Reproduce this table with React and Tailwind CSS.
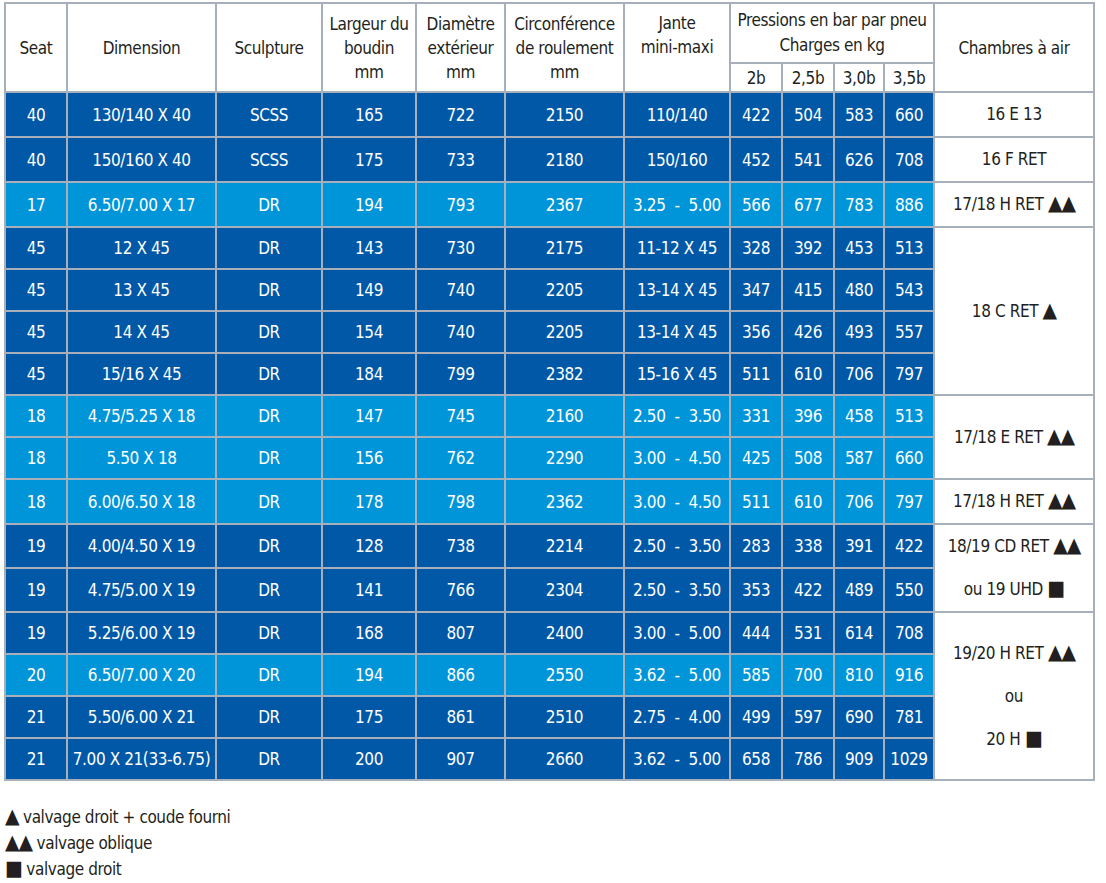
const DARK = "bg-[#0058a7]";
const LIGHT = "bg-[#0095d9]";

const rows = [
  ["40", "130/140 X 40", "SCSS", "165", "722", "2150", "110/140", "422", "504", "583", "660", "d"],
  ["40", "150/160 X 40", "SCSS", "175", "733", "2180", "150/160", "452", "541", "626", "708", "d"],
  ["17", "6.50/7.00 X 17", "DR", "194", "793", "2367", "3.25  -  5.00", "566", "677", "783", "886", "l"],
  ["45", "12 X 45", "DR", "143", "730", "2175", "11-12 X 45", "328", "392", "453", "513", "d"],
  ["45", "13 X 45", "DR", "149", "740", "2205", "13-14 X 45", "347", "415", "480", "543", "d"],
  ["45", "14 X 45", "DR", "154", "740", "2205", "13-14 X 45", "356", "426", "493", "557", "d"],
  ["45", "15/16 X 45", "DR", "184", "799", "2382", "15-16 X 45", "511", "610", "706", "797", "d"],
  ["18", "4.75/5.25 X 18", "DR", "147", "745", "2160", "2.50  -  3.50", "331", "396", "458", "513", "l"],
  ["18", "5.50 X 18", "DR", "156", "762", "2290", "3.00  -  4.50", "425", "508", "587", "660", "l"],
  ["18", "6.00/6.50 X 18", "DR", "178", "798", "2362", "3.00  -  4.50", "511", "610", "706", "797", "l"],
  ["19", "4.00/4.50 X 19", "DR", "128", "738", "2214", "2.50  -  3.50", "283", "338", "391", "422", "d"],
  ["19", "4.75/5.00 X 19", "DR", "141", "766", "2304", "2.50  -  3.50", "353", "422", "489", "550", "d"],
  ["19", "5.25/6.00 X 19", "DR", "168", "807", "2400", "3.00  -  5.00", "444", "531", "614", "708", "d"],
  ["20", "6.50/7.00 X 20", "DR", "194", "866", "2550", "3.62  -  5.00", "585", "700", "810", "916", "l"],
  ["21", "5.50/6.00 X 21", "DR", "175", "861", "2510", "2.75  -  4.00", "499", "597", "690", "781", "d"],
  ["21", "7.00 X 21(33-6.75)", "DR", "200", "907", "2660", "3.62  -  5.00", "658", "786", "909", "1029", "d"],
];

// chambres à air, keyed by the row index where the merged cell starts
const chambres = {
  0: { span: 1, lines: [["16 E 13", ""]] },
  1: { span: 1, lines: [["16 F RET", ""]] },
  2: { span: 1, lines: [["17/18 H RET ", "▲▲"]] },
  3: { span: 4, lines: [["18 C RET ", "▲"]] },
  7: { span: 2, lines: [["17/18 E RET ", "▲▲"]] },
  9: { span: 1, lines: [["17/18 H RET ", "▲▲"]] },
  10: { span: 2, lines: [["18/19 CD RET ", "▲▲"], ["ou 19 UHD ", "■"]] },
  12: { span: 4, lines: [["19/20 H RET ", "▲▲"], ["ou", ""], ["20 H ", "■"]] },
};

const widths = [62, 149, 106, 94, 89, 119, 106, 52, 52, 50, 50, 160];
const cell = "border-2 border-[#a7b0ba] text-center align-middle p-0";

function Sym({ s }) {
  if (!s) return null;
  return <span className="text-[21px] leading-none tracking-[-1px]">{s}</span>;
}

export default function App() {
  return (
    <div
      className="bg-white min-h-screen pt-[2px] pl-[4px] text-[17px] tracking-[-0.4px] text-[#231f20]"
      style={{ fontFamily: '"Liberation Sans Narrow", "DejaVu Sans Condensed", "Liberation Sans", sans-serif' }}
    >
      <table className="table-fixed border-collapse w-[1090px] border-2 border-[#a7b0ba]">
        <colgroup>
          {widths.map((w, i) => (
            <col key={i} style={{ width: w }} />
          ))}
        </colgroup>
        <thead>
          <tr className="h-[60px]">
            <th rowSpan={2} className={`${cell} font-normal leading-[24px]`}>Seat</th>
            <th rowSpan={2} className={`${cell} font-normal leading-[24px]`}>Dimension</th>
            <th rowSpan={2} className={`${cell} font-normal leading-[24px]`}>Sculpture</th>
            <th rowSpan={2} className={`${cell} font-normal leading-[24px]`}>
              Largeur du
              <br />
              boudin
              <br />
              mm
            </th>
            <th rowSpan={2} className={`${cell} font-normal leading-[24px]`}>
              Diamètre
              <br />
              extérieur
              <br />
              mm
            </th>
            <th rowSpan={2} className={`${cell} font-normal leading-[24px]`}>
              Circonférence
              <br />
              de roulement
              <br />
              mm
            </th>
            <th rowSpan={2} className={`${cell} font-normal leading-[24px] pb-[26px]`}>
              Jante
              <br />
              mini-maxi
            </th>
            <th colSpan={4} className={`${cell} font-normal leading-[25px]`}>
              Pressions en bar par pneu
              <br />
              Charges en kg
            </th>
            <th rowSpan={2} className={`${cell} font-normal leading-[24px]`}>Chambres à air</th>
          </tr>
          <tr className="h-[29px]">
            {["2b", "2,5b", "3,0b", "3,5b"].map((p) => (
              <th key={p} className={`${cell} font-normal leading-[24px]`}>
                {p}
              </th>
            ))}
          </tr>
        </thead>
        <tbody>
          {rows.map((r, i) => {
            const bg = r[11] === "l" ? LIGHT : DARK;
            const ch = chambres[i];
            return (
              <tr key={i} className="h-[42px]">
                {r.slice(0, 11).map((v, j) => (
                  <td key={j} className={`${cell} ${bg} text-white whitespace-pre leading-[20px]`}>
                    {v}
                  </td>
                ))}
                {ch && (
                  <td rowSpan={ch.span} className={`${cell} bg-white text-[#231f20] leading-[43px]`}>
                    {ch.lines.map(([t, s]) => (
                      <div key={t} className="whitespace-pre">
                        {t}
                        <Sym s={s} />
                      </div>
                    ))}
                  </td>
                )}
              </tr>
            );
          })}
        </tbody>
      </table>
      <div className="mt-[23px] leading-[26px] pl-[1px]">
        <div>
          <Sym s="▲" /> valvage droit + coude fourni
        </div>
        <div>
          <Sym s="▲▲" /> valvage oblique
        </div>
        <div>
          <Sym s="■" /> valvage droit
        </div>
      </div>
    </div>
  );
}
